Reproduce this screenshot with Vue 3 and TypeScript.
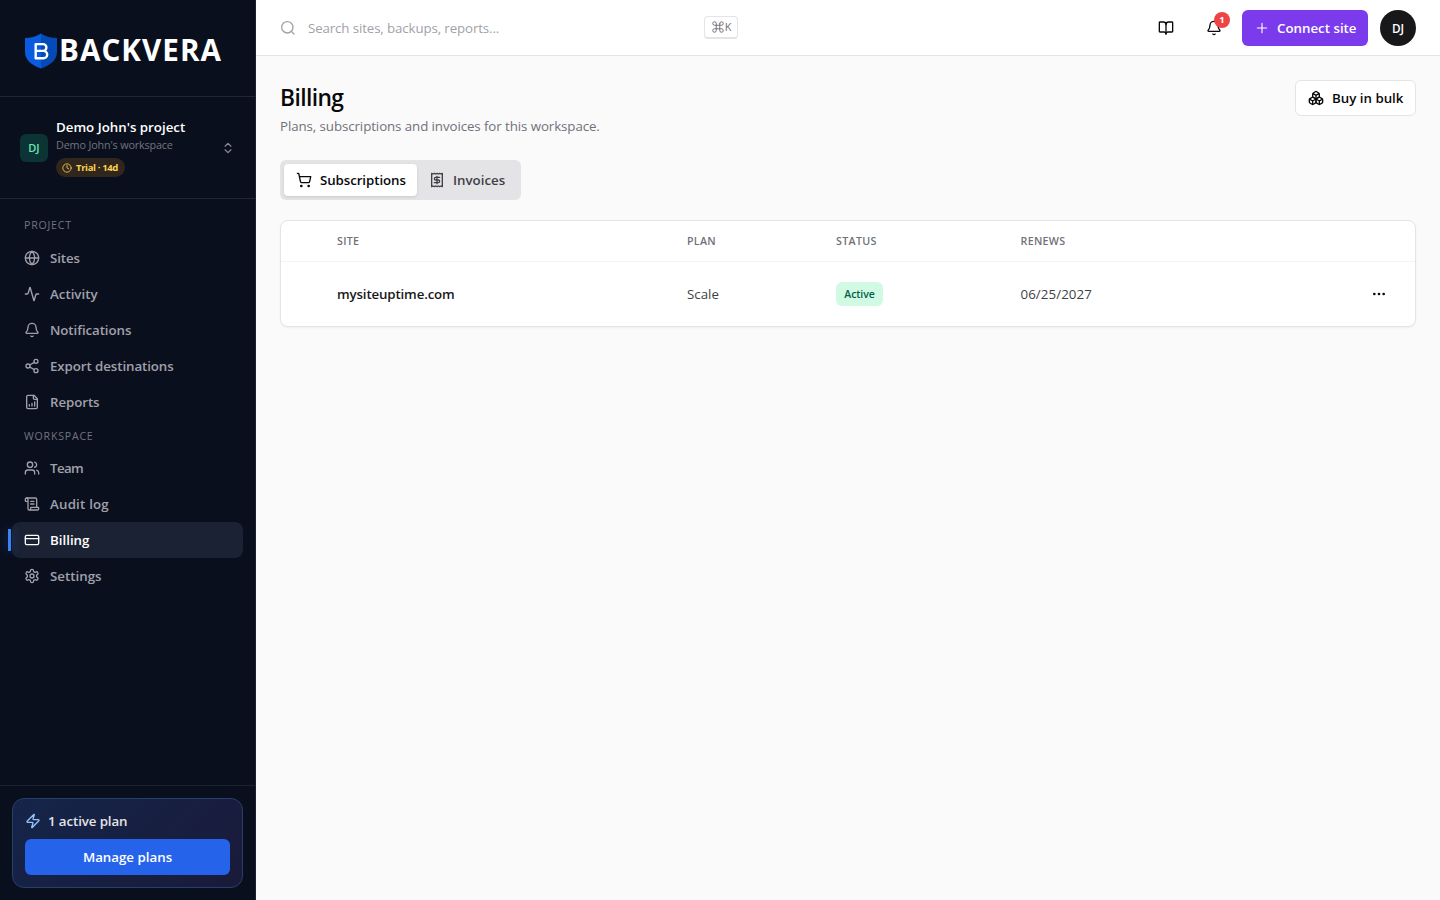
<script setup lang="ts">
interface NavItem {
  label: string
  key: string
  icon: string
  active?: boolean
}

const projectNav: NavItem[] = [
  { label: 'Sites', key: 'sites', icon: '<circle cx="12" cy="12" r="10"/><path d="M12 2a14.5 14.5 0 0 0 0 20 14.5 14.5 0 0 0 0-20"/><path d="M2 12h20"/>' },
  { label: 'Activity', key: 'activity', icon: '<path d="M22 12h-2.48a2 2 0 0 0-1.93 1.46l-2.35 8.36a.25.25 0 0 1-.48 0L9.24 2.18a.25.25 0 0 0-.48 0l-2.35 8.36A2 2 0 0 1 4.49 12H2"/>' },
  { label: 'Notifications', key: 'notifications', icon: '<path d="M10.268 21a2 2 0 0 0 3.464 0"/><path d="M3.262 15.326A1 1 0 0 0 4 17h16a1 1 0 0 0 .74-1.673C19.41 13.956 18 12.499 18 8A6 6 0 0 0 6 8c0 4.499-1.411 5.956-2.738 7.326"/>' },
  { label: 'Export destinations', key: 'export', icon: '<circle cx="18" cy="5" r="3"/><circle cx="6" cy="12" r="3"/><circle cx="18" cy="19" r="3"/><path d="m8.59 13.51 6.83 3.98M15.41 6.51l-6.82 3.98"/>' },
  { label: 'Reports', key: 'reports', icon: '<path d="M15 2H6a2 2 0 0 0-2 2v16a2 2 0 0 0 2 2h12a2 2 0 0 0 2-2V7Z"/><path d="M14 2v4a2 2 0 0 0 2 2h4"/><path d="M8 18v-2M12 18v-4M16 18v-6"/>' },
]

const workspaceNav: NavItem[] = [
  { label: 'Team', key: 'team', icon: '<path d="M16 21v-2a4 4 0 0 0-4-4H6a4 4 0 0 0-4 4v2"/><circle cx="9" cy="7" r="4"/><path d="M22 21v-2a4 4 0 0 0-3-3.87"/><path d="M16 3.13a4 4 0 0 1 0 7.75"/>' },
  { label: 'Audit log', key: 'audit', icon: '<path d="M15 12h-5M15 8h-5"/><path d="M19 17V5a2 2 0 0 0-2-2H4"/><path d="M8 21h12a2 2 0 0 0 2-2v-1a1 1 0 0 0-1-1H11a1 1 0 0 0-1 1v1a2 2 0 1 1-4 0V5a2 2 0 1 0-4 0v2a1 1 0 0 0 1 1h3"/>' },
  { label: 'Billing', key: 'billing', active: true, icon: '<rect width="20" height="14" x="2" y="5" rx="2"/><path d="M2 10h20"/>' },
  { label: 'Settings', key: 'settings', icon: '<path d="M12.22 2h-.44a2 2 0 0 0-2 2v.18a2 2 0 0 1-1 1.73l-.43.25a2 2 0 0 1-2 0l-.15-.08a2 2 0 0 0-2.73.73l-.22.38a2 2 0 0 0 .73 2.73l.15.1a2 2 0 0 1 1 1.72v.51a2 2 0 0 1-1 1.74l-.15.09a2 2 0 0 0-.73 2.73l.22.38a2 2 0 0 0 2.73.73l.15-.08a2 2 0 0 1 2 0l.43.25a2 2 0 0 1 1 1.73V20a2 2 0 0 0 2 2h.44a2 2 0 0 0 2-2v-.18a2 2 0 0 1 1-1.73l.43-.25a2 2 0 0 1 2 0l.15.08a2 2 0 0 0 2.73-.73l.22-.39a2 2 0 0 0-.73-2.73l-.15-.08a2 2 0 0 1-1-1.74v-.5a2 2 0 0 1 1-1.74l.15-.09a2 2 0 0 0 .73-2.73l-.22-.38a2 2 0 0 0-2.73-.73l-.15.08a2 2 0 0 1-2 0l-.43-.25a2 2 0 0 1-1-1.73V4a2 2 0 0 0-2-2z"/><circle cx="12" cy="12" r="3"/>' },
]

const sections = [
  { title: 'PROJECT', key: 'project', items: projectNav },
  { title: 'WORKSPACE', key: 'workspace', items: workspaceNav },
]

const subscriptions = [
  { site: 'mysiteuptime.com', plan: 'Scale', status: 'Active', renews: '06/25/2027' },
]
</script>

<template>
  <div class="app">
    <aside class="sidebar">
      <div class="brand">
        <svg class="shield" width="34" height="38" viewBox="0 0 34 38">
          <path d="M17 1.5 C12 4.5 7 6 1 6 V20 C1 28 8 33.5 17 36.5 Z" fill="#0a5be0" />
          <path d="M17 1.5 C22 4.5 27 6 33 6 V20 C33 28 26 33.5 17 36.5 Z" fill="#044bb8" />
          <path d="M11.700 12.100 H19 A3.400 3.400 0 0 1 19 18.900 H11.700 Z M11.700 18.900 H19.500 A3.700 3.700 0 0 1 19.500 26.300 H11.700 Z" fill="none" stroke="#fff" stroke-width="2.400" stroke-linejoin="round" />
        </svg>
        <span class="brand-name">BACKVERA</span>
      </div>

      <div class="switcher">
        <div class="project-mark">DJ</div>
        <div class="project-info">
          <div class="project-name"><span>Demo John's project</span></div>
          <div class="workspace-name"><span>Demo John's workspace</span></div>
          <div class="trial">
            <svg class="icon" width="10" height="10" viewBox="0 0 24 24"><circle cx="12" cy="12" r="10" /><path d="M12 6v6l4 2" /></svg>
            <span>Trial · 14d</span>
          </div>
        </div>
        <svg class="icon chevrons" width="14" height="14" viewBox="0 0 24 24"><path d="m7 15 5 5 5-5M7 9l5-5 5 5" /></svg>
      </div>

      <nav class="nav">
        <section v-for="s in sections" :key="s.key" :class="['group', s.key]">
          <div class="group-title"><span>{{ s.title }}</span></div>
          <a v-for="item in s.items" :key="item.key" :class="['nav-item', item.key, { active: item.active }]">
            <svg class="icon" width="16" height="16" viewBox="0 0 24 24" v-html="item.icon"></svg>
            <span>{{ item.label }}</span>
          </a>
        </section>
      </nav>

      <div class="plan-area">
        <div class="plan-card">
          <div class="plan-line">
            <svg class="icon" width="16" height="16" viewBox="0 0 24 24"><path d="M4 14a1 1 0 0 1-.78-1.63l9.9-10.2a.5.5 0 0 1 .86.46l-1.92 6.02A1 1 0 0 0 13 10h7a1 1 0 0 1 .78 1.63l-9.9 10.2a.5.5 0 0 1-.86-.46l1.92-6.02A1 1 0 0 0 11 14z" /></svg>
            <span>1 active plan</span>
          </div>
          <button class="manage"><span>Manage plans</span></button>
        </div>
      </div>
    </aside>

    <div class="content">
      <header class="topbar">
        <div class="search">
          <svg class="icon" width="16" height="16" viewBox="0 0 24 24"><path d="m21 21-4.34-4.34" /><circle cx="11" cy="11" r="8.5" /></svg>
          <span class="placeholder">Search sites, backups, reports...</span>
          <kbd>
            <svg class="icon" width="14" height="14" viewBox="0 0 24 24"><path d="M15 6v12a3 3 0 1 0 3-3H6a3 3 0 1 0 3 3V6a3 3 0 1 0-3 3h12a3 3 0 1 0-3-3" /></svg><span>K</span>
          </kbd>
        </div>
        <div class="tools">
          <div class="tool">
            <svg class="icon" width="16" height="16" viewBox="0 0 24 24"><path d="M12 7v14" /><path d="M3 18a1 1 0 0 1-1-1V4a1 1 0 0 1 1-1h5a4 4 0 0 1 4 4 4 4 0 0 1 4-4h5a1 1 0 0 1 1 1v13a1 1 0 0 1-1 1h-6a3 3 0 0 0-3 3 3 3 0 0 0-3-3z" /></svg>
          </div>
          <div class="tool">
            <svg class="icon" width="16" height="16" viewBox="0 0 24 24"><path d="M10.268 21a2 2 0 0 0 3.464 0" /><path d="M3.262 15.326A1 1 0 0 0 4 17h16a1 1 0 0 0 .74-1.673C19.41 13.956 18 12.499 18 8A6 6 0 0 0 6 8c0 4.499-1.411 5.956-2.738 7.326" /></svg>
            <span class="count">1</span>
          </div>
          <button class="connect">
            <svg class="icon" width="16" height="16" viewBox="0 0 24 24"><path d="M5 12h14M12 5v14" /></svg>
            <span>Connect site</span>
          </button>
          <div class="avatar">DJ</div>
        </div>
      </header>

      <main class="page">
        <div class="page-head">
          <div>
            <h1><span>Billing</span></h1>
            <p><span>Plans, subscriptions and invoices for this workspace.</span></p>
          </div>
          <button class="bulk">
            <svg class="icon" width="16" height="16" viewBox="0 0 24 24"><path d="M2.97 12.92A2 2 0 0 0 2 14.63v3.24a2 2 0 0 0 .97 1.71l3 1.8a2 2 0 0 0 2.06 0L12 19v-5.5l-5-3-4.03 2.42Z" /><path d="m7 16.5-4.74-2.85M7 16.5l5-3M7 16.5v5.17M12 13.5V19l3.97 2.38a2 2 0 0 0 2.06 0l3-1.8a2 2 0 0 0 .97-1.71v-3.24a2 2 0 0 0-.97-1.71L17 10.5l-5 3ZM17 16.5l-5-3M17 16.5l4.74-2.85M17 16.5v5.17" /><path d="M7.97 4.42A2 2 0 0 0 7 6.13v4.37l5 3 5-3V6.13a2 2 0 0 0-.97-1.71l-3-1.8a2 2 0 0 0-2.06 0l-3 1.8ZM12 8 7.26 5.15M12 8l4.74-2.85M12 13.5V8" /></svg>
            <span>Buy in bulk</span>
          </button>
        </div>

        <div class="tabs">
          <button class="tab selected">
            <svg class="icon" width="16" height="16" viewBox="0 0 24 24"><circle cx="8" cy="21" r="1" /><circle cx="19" cy="21" r="1" /><path d="M2.05 2.05h2l2.66 12.42a2 2 0 0 0 2 1.58h9.78a2 2 0 0 0 1.95-1.57l1.65-7.43H5.12" /></svg>
            <span>Subscriptions</span>
          </button>
          <button class="tab invoices">
            <svg class="icon" width="16" height="16" viewBox="0 0 24 24"><path d="M4 2v20l2-1 2 1 2-1 2 1 2-1 2 1 2-1 2 1V2l-2 1-2-1-2 1-2-1-2 1-2-1-2 1Z" /><path d="M16 8h-6a2 2 0 1 0 0 4h4a2 2 0 1 1 0 4H8M12 17.5v-11" /></svg>
            <span>Invoices</span>
          </button>
        </div>

        <div class="table">
          <div class="row head">
            <span></span>
            <span>SITE</span>
            <span>PLAN</span>
            <span>STATUS</span>
            <span>RENEWS</span>
            <span></span>
          </div>
          <div v-for="sub in subscriptions" :key="sub.site" class="row">
            <span></span>
            <span class="site">{{ sub.site }}</span>
            <span class="plan">{{ sub.plan }}</span>
            <span><em class="badge">{{ sub.status }}</em></span>
            <span class="date">{{ sub.renews }}</span>
            <span class="more">
              <svg class="icon" width="16" height="16" viewBox="0 0 24 24"><circle cx="12" cy="12" r="1" /><circle cx="19" cy="12" r="1" /><circle cx="5" cy="12" r="1" /></svg>
            </span>
          </div>
        </div>
      </main>
    </div>
  </div>
</template>

<style>
body {
  margin: 0;
  overflow: hidden;
}
</style>

<style scoped>
.app {
  display: flex;
  width: 1440px;
  height: 900px;
  overflow: hidden;
  background: #fafafa;
  color: #09090b;
  font-family: 'Segoe UI', 'Open Sans', 'Noto Sans', sans-serif;
  font-size: 13.3px;
  line-height: 20px;
}
.app * {
  box-sizing: border-box;
}
span, em {
  white-space: nowrap;
}
button {
  border: 0;
  padding: 0;
  font: inherit;
  color: inherit;
}
.icon {
  flex: none;
  fill: none;
  stroke: currentColor;
  stroke-width: 2;
  stroke-linecap: round;
  stroke-linejoin: round;
}

/* Sidebar */
.sidebar {
  display: flex;
  flex-direction: column;
  flex: none;
  width: 256px;
  background: #0a0f1e;
  border-right: 1px solid #1d212f;
  color: #fff;
}
.brand {
  display: flex;
  align-items: center;
  height: 97px;
  padding: 5px 0 0 24px;
  border-bottom: 1px solid #222633;
}
.shield {
  flex: none;
}
.brand-name {
  margin: -2px 0 0 1px;
  font-size: 29.6px;
  font-weight: 700;
  line-height: 40px;
  letter-spacing: 1.05px;
}
.switcher {
  display: flex;
  align-items: center;
  height: 102px;
  padding: 0 20px;
  border-bottom: 1px solid #222633;
}
.project-mark {
  display: flex;
  align-items: center;
  justify-content: center;
  width: 28px;
  height: 28px;
  border-radius: 6px;
  background: #0c3434;
  color: #6ee7b7;
  font-size: 11px;
  font-weight: 600;
}
.project-info {
  flex: 1;
  margin-left: 8px;
}
.project-name {
  height: 18px;
  line-height: 18px;
  font-weight: 600;
}
.workspace-name {
  height: 17px;
  line-height: 18px;
  color: #71747e;
  font-size: 10.8px;
  letter-spacing: -0.16px;
}
.trial {
  display: flex;
  align-items: center;
  gap: 4px;
  width: 69px;
  height: 19px;
  margin-top: 5px;
  padding-left: 6px;
  border-radius: 10px;
  background: #30261d;
  color: #fcd34d;
  font-size: 9.5px;
  font-weight: 700;
  letter-spacing: -0.35px;
}
.chevrons {
  color: #8b8d94;
}
.nav {
  flex: 1;
  padding: 16px 12px 0;
}
.group-title {
  height: 25px;
  padding-left: 12px;
  line-height: 20px;
  color: #71747e;
  font-size: 10.6px;
  letter-spacing: 0.78px;
}
.group.workspace .group-title {
  height: 30px;
  line-height: 32px;
}
.nav-item {
  position: relative;
  display: flex;
  align-items: center;
  gap: 10px;
  height: 36px;
  padding-left: 12px;
  border-radius: 8px;
  color: #a1a1aa;
  font-weight: 600;
  letter-spacing: -0.08px;
}
.nav-item.activity {
  letter-spacing: 0;
}
.nav-item.team {
  letter-spacing: -0.6px;
}
.nav-item.audit {
  letter-spacing: 0.2px;
}
.nav-item.billing, .nav-item.settings {
  letter-spacing: 0;
}
.nav-item.active {
  background: #1a2234;
  color: #fff;
}
.nav-item.active::before {
  content: '';
  position: absolute;
  left: -4px;
  top: 7px;
  width: 3px;
  height: 22px;
  background: #3b82f6;
  box-shadow: 0 0 12px rgba(59, 130, 246, 0.4);
}
.plan-area {
  height: 115px;
  padding: 12px;
  border-top: 1px solid #1d2130;
}
.plan-card {
  height: 90px;
  padding: 12px;
  border: 1px solid #263f6b;
  border-radius: 12px;
  background: linear-gradient(135deg, #142549, #1a1a3a);
}
.plan-line {
  display: flex;
  align-items: center;
  gap: 7px;
  height: 20px;
  margin-bottom: 8px;
  font-weight: 600;
  letter-spacing: -0.1px;
  color: #e4e4e7;
}
.plan-line .icon {
  color: #93c5fd;
}
.manage {
  display: block;
  width: 100%;
  height: 36px;
  border-radius: 6px;
  background: #2563eb;
  font-weight: 600;
}

/* Top bar */
.content {
  flex: 1;
  min-width: 0;
}
.topbar {
  display: flex;
  align-items: center;
  justify-content: space-between;
  height: 56px;
  padding: 0 24px;
  background: #fff;
  border-bottom: 1px solid #e4e4e7;
}
.search {
  display: flex;
  align-items: center;
  width: 458px;
  color: #a1a1aa;
}
.placeholder {
  flex: 1;
  margin-left: 12px;
  letter-spacing: -0.12px;
}
kbd {
  display: flex;
  align-items: center;
  justify-content: center;
  width: 34px;
  height: 23px;
  margin-top: -1px;
  border: 1px solid #e4e4e7;
  border-bottom-width: 2px;
  border-radius: 4px;
  color: #71717a;
  font-family: inherit;
  font-size: 11px;
}
kbd .icon {
  stroke-width: 1.7;
}
.tools {
  display: flex;
  align-items: center;
  gap: 12px;
}
.tool {
  position: relative;
  display: flex;
  align-items: center;
  justify-content: center;
  width: 36px;
  height: 36px;
}
.tool:nth-child(2) {
  margin-right: -2px;
}
.count {
  position: absolute;
  top: 2px;
  right: 2px;
  width: 16px;
  height: 16px;
  border-radius: 8px;
  background: #ef4444;
  color: #fff;
  font-size: 9.5px;
  font-weight: 700;
  line-height: 16px;
  text-align: center;
}
.connect {
  display: flex;
  align-items: center;
  gap: 7px;
  width: 126px;
  height: 36px;
  padding-left: 12px;
  border-radius: 6px;
  background: #7c3aed;
  color: #fff;
  font-weight: 600;
}
.connect .icon {
  stroke-width: 1.7;
}
.avatar {
  display: flex;
  align-items: center;
  justify-content: center;
  width: 36px;
  height: 36px;
  border-radius: 50%;
  background: #18181b;
  color: #fff;
  font-size: 11.8px;
  font-weight: 600;
}

/* Page */
.page {
  padding: 24px;
}
.page-head {
  display: flex;
  justify-content: space-between;
  height: 80px;
}
h1 {
  height: 36px;
  margin: 0;
  font-size: 22.8px;
  font-weight: 600;
  line-height: 36px;
  letter-spacing: -0.6px;
}
p {
  margin: 0;
  color: #71717a;
  letter-spacing: -0.08px;
}
.bulk {
  display: flex;
  align-items: center;
  gap: 8px;
  width: 121px;
  height: 36px;
  padding-left: 12px;
  border: 1px solid #e4e4e7;
  border-radius: 6px;
  background: #fff;
  font-weight: 600;
}
.tabs {
  display: flex;
  width: 241px;
  height: 40px;
  padding: 4px;
  border-radius: 6px;
  background: #e4e4e7;
}
.tab {
  display: flex;
  align-items: center;
  gap: 8px;
  height: 32px;
  padding-left: 12px;
  border-radius: 4px;
  background: transparent;
  color: #3f3f46;
  font-weight: 600;
}
.tab.selected {
  width: 133px;
  background: #fff;
  color: #09090b;
  letter-spacing: -0.08px;
  box-shadow: 0 1px 3px rgba(0, 0, 0, 0.12);
}
.table {
  margin-top: 20px;
  border: 1px solid #e4e4e7;
  border-radius: 8px;
  background: #fff;
  box-shadow: 0 1px 2px rgba(0, 0, 0, 0.05);
}
.row {
  display: grid;
  grid-template-columns: 56px 350px 149px 184.5px 1fr 36px;
  align-items: center;
  height: 64px;
  color: #3f3f46;
}
.row.head {
  height: 41px;
  border-bottom: 1px solid #f4f4f5;
  color: #71717a;
  font-size: 10.7px;
  font-weight: 600;
  letter-spacing: 0.3px;
}
.site {
  color: #18181b;
  font-weight: 600;
  letter-spacing: -0.15px;
}
.date {
  letter-spacing: 0.08px;
}
.badge {
  display: inline-block;
  width: 47px;
  height: 24px;
  border-radius: 6px;
  background: #d1fae5;
  color: #065f46;
  font-size: 10.5px;
  font-style: normal;
  font-weight: 600;
  letter-spacing: -0.1px;
  line-height: 24px;
  text-align: center;
  vertical-align: middle;
}
.more {
  display: flex;
  margin-left: -8px;
  color: #09090b;
}
</style>
